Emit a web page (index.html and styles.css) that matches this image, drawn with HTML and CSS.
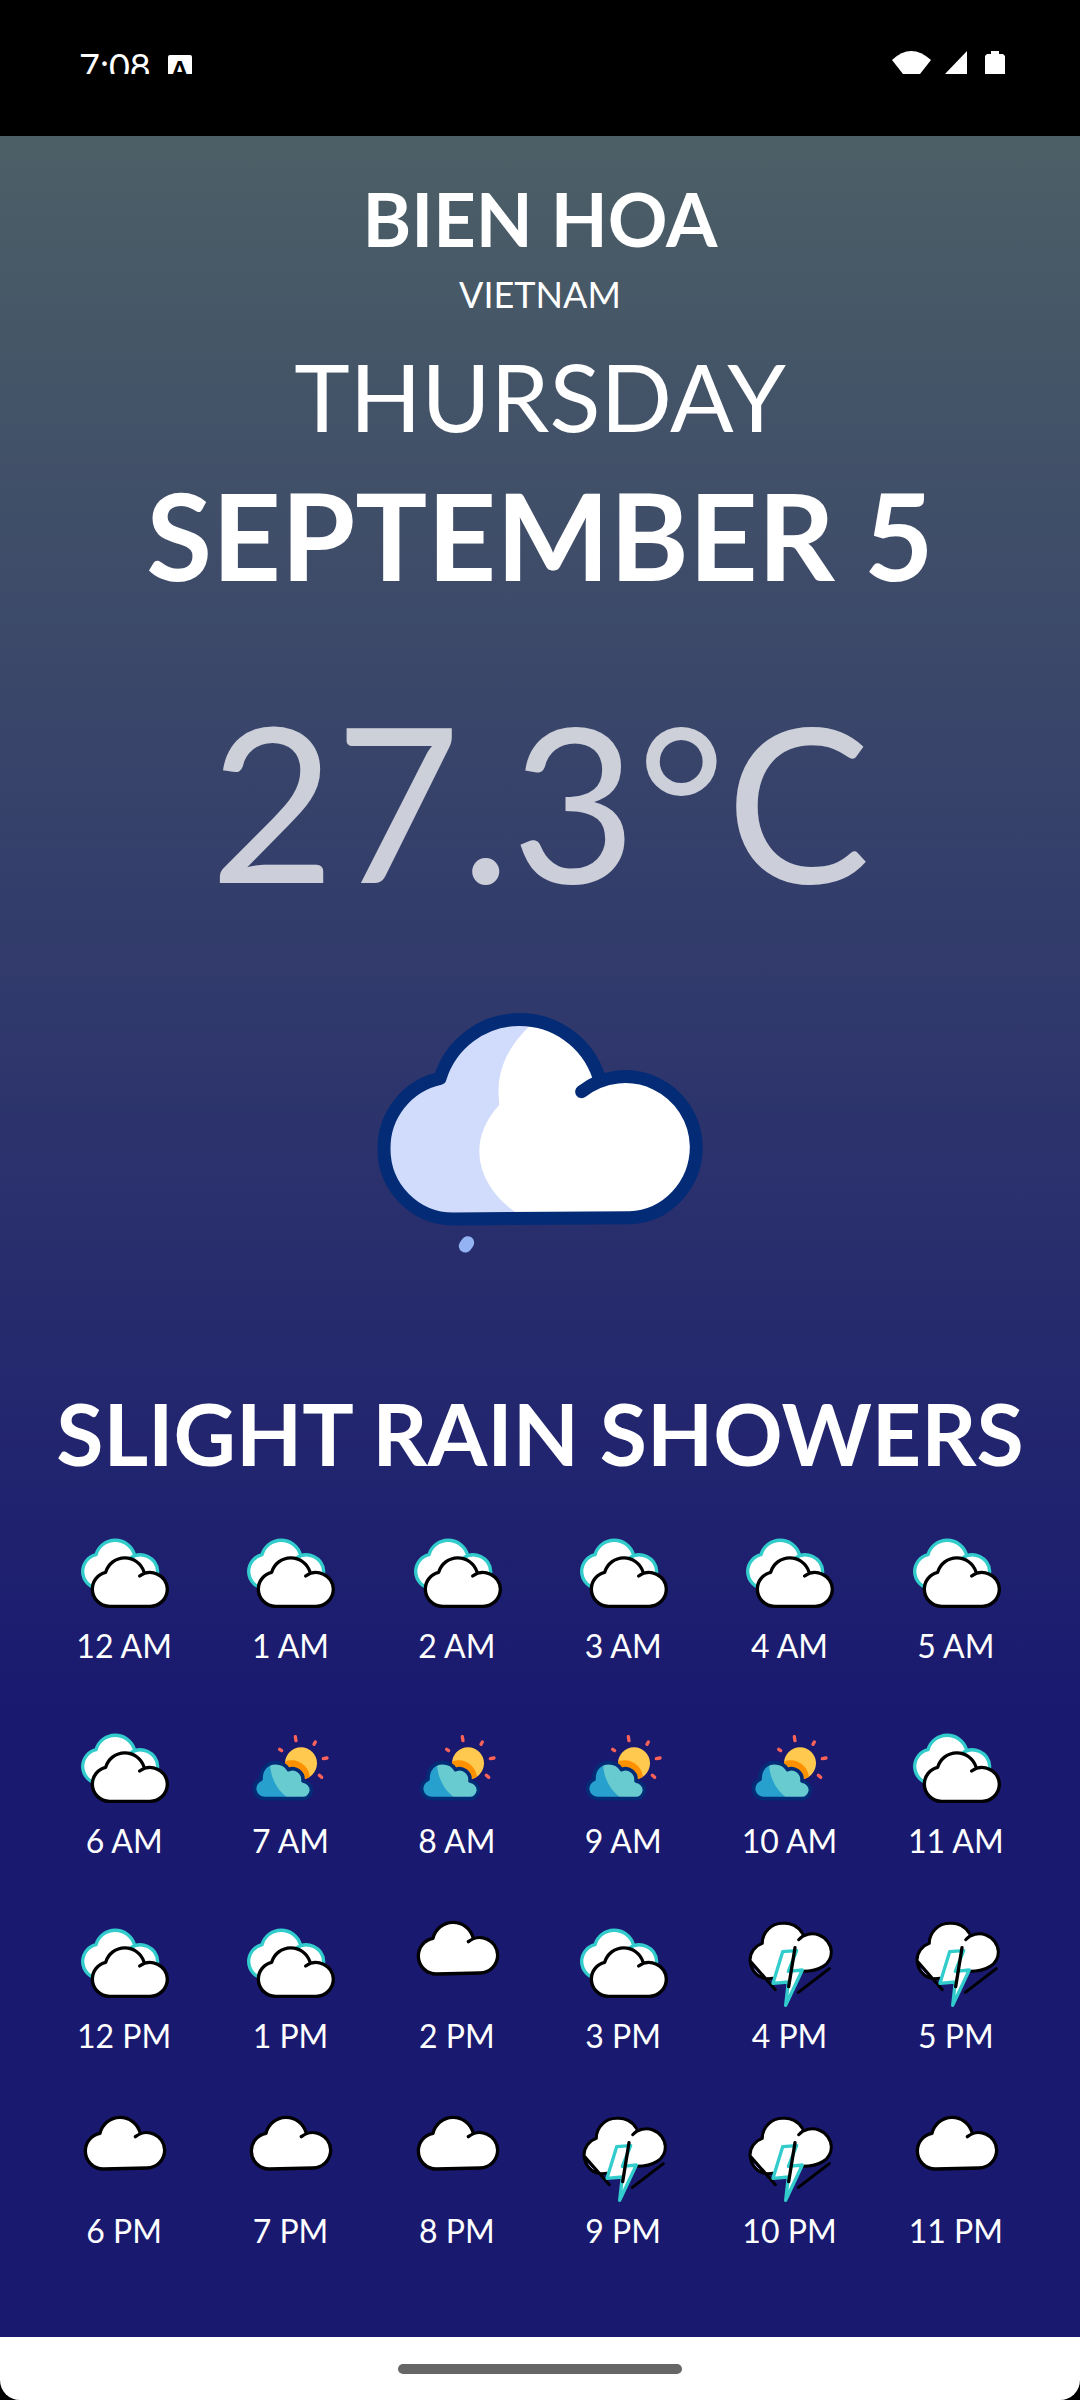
FILE: index.html
```html
<!DOCTYPE html>
<html lang="en">
<head>
<meta charset="utf-8">
<meta name="viewport" content="width=device-width, initial-scale=1">
<title>Weather – Bien Hoa</title>
<link rel="stylesheet" href="styles.css">
</head>
<body>
<svg class="sprite" aria-hidden="true">
  <defs>
    <clipPath id="sun-clip"><circle cx="183" cy="139" r="48"/></clipPath>
    <g id="cloud-shape">
      <path d="M107 253A52 52 0 0 1 55 201A52 52 0 0 1 95 151A59 59 0 0 1 210 150L197 162A52 52 0 0 1 280 201A52 52 0 0 1 228 253Z" fill="#fff" stroke="none"/>
      <path d="M210 150A60 60 0 0 0 95 151A52 52 0 0 0 55 201A52 52 0 0 0 107 253H228A52 52 0 0 0 280 201A52 52 0 0 0 197 162" fill="none" stroke-width="10"/>
    </g>
  </defs>
  <symbol id="overcast" viewBox="0 0 300 300">
    <use href="#cloud-shape" x="-29" y="-53" stroke="#33cccc"/>
    <use href="#cloud-shape" stroke="#000"/>
  </symbol>
  <symbol id="cloudy" viewBox="0 0 300 300">
    <path d="M88 186A54 54 0 0 1 34 132A54 54 0 0 1 78 79A62 62 0 0 1 198 76L184 89A54 54 0 0 1 272 129A54 54 0 0 1 219 183Z" fill="#fff"/>
    <path d="M198 76A62 62 0 0 0 78 79A54 54 0 0 0 34 132A54 54 0 0 0 88 186L219 183A54 54 0 0 0 272 129A54 54 0 0 0 184 89" fill="none" stroke="#000" stroke-width="10"/>
  </symbol>
  <symbol id="partly" viewBox="0 0 300 300">
    <circle cx="183" cy="139" r="48" fill="#ffc84e"/>
    <circle cx="155" cy="185" r="55" fill="#ff9100" clip-path="url(#sun-clip)"/>
    <path d="M75 245A30 30 0 0 1 63 187C62 158 80 137 107 137C125 137 138 145 146 158C165 148 192 165 189 192C205 196 215 208 214 222C212 237 200 245 190 245Z" fill="#67cbd0"/>
    <path d="M75 245A30 30 0 0 1 63 187C62 164 72 147 90 140C92 185 112 220 146 245Z" fill="#27a0cd"/>
    <path d="M75 245A30 30 0 0 1 63 187C62 158 80 137 107 137C125 137 138 145 146 158C165 148 192 165 189 192C205 196 215 208 214 222C212 237 200 245 190 245Z" fill="none" stroke="#032b76" stroke-width="11"/>
    <path d="M166 59l2 12M226 75l-4 7M119 97l6 4M250 125l11-2M238 175l7 6" fill="none" stroke="#ff6259" stroke-width="10"/>
  </symbol>
  <symbol id="storm" viewBox="0 0 300 300">
    <path d="M70 94A61 60 0 0 1 131 34A61 61 0 0 1 190 64L179 83A57 57 0 0 1 277 119C277 158 240 178 191 178L101 199L76 196L33 144C33 120 48 101 70 94Z" fill="#fff"/>
    <path d="M46 171Q56 188 70 190" fill="none" stroke="#fff" stroke-width="2"/>
    <path d="M190 64A61 61 0 0 0 131 34A61 60 0 0 0 70 94C48 101 33 122 33 144C35 178 60 206 101 199M179 83A57 57 0 0 1 277 119C277 158 240 178 191 178M33 146L109 233M271 170L178 241" fill="none" stroke="#000" stroke-width="9"/>
    <path d="M173 116L131 119L102 214L148 210L140 280L190 174L148 178Z" fill="#fff" stroke="#33cccc" stroke-width="10"/>
    <path d="M168 107L149 224" fill="none" stroke="#000" stroke-width="10"/>
  </symbol>
</svg>

<header class="status">
  <div class="status-row">
    <div class="status-side">
      <time class="clock">7:08</time>
      <span class="badge">A</span>
    </div>
    <div class="status-side status-icons">
      <svg width="39" height="34" viewBox="0 0 39 34" aria-label="Wi-Fi"><path d="M0 9Q19 -9 39 9L28 23H11Z" fill="#fff"/></svg>
      <svg width="28" height="24" viewBox="0 0 28 24" aria-label="Signal"><path d="M23 0V24H0Z" fill="#fff"/></svg>
      <svg width="20" height="34" viewBox="0 0 20 34" aria-label="Battery"><path d="M6 0H14V3H18L20 5V34H0V5L2 3H6Z" fill="#fff"/></svg>
    </div>
  </div>
</header>

<main class="weather">
  <h1 class="city">BIEN HOA</h1>
  <p class="country">VIETNAM</p>
  <p class="weekday">THURSDAY</p>
  <p class="date">SEPTEMBER 5</p>
  <p class="temperature">27.3°C</p>
  <svg class="hero" viewBox="0 0 1080 840" role="img" aria-label="Rain cloud">
    <path d="M280 690A208 210 0 0 1 72 480A214 214 0 0 1 240 268A250 250 0 0 1 716 262L665 308A213 213 0 0 1 1009 472A205 214 0 0 1 808 686Z" fill="#fff"/>
    <path d="M280 690A208 210 0 0 1 72 480A214 214 0 0 1 240 268A250 250 0 0 1 520 100C440 175 405 250 418 347C375 395 358 440 358 487C358 560 405 630 475 676Z" fill="#d1dbfb"/>
    <path d="M716 262A250 250 0 0 0 240 268A214 214 0 0 0 72 480A208 210 0 0 0 280 690L808 686A205 214 0 0 0 1009 472A213 213 0 0 0 665 308" fill="none" stroke="#032b76" stroke-width="39" stroke-linecap="round" stroke-linejoin="round"/>
    <path d="M323 761L316 771" stroke="#94b3f3" stroke-width="39" stroke-linecap="round"/>
  </svg>
  <h2 class="condition">SLIGHT RAIN SHOWERS</h2>
  <ul class="hours">
    <li class="hour"><svg class="icon" aria-hidden="true"><use href="#overcast"/></svg><span>12 AM</span></li>
    <li class="hour"><svg class="icon" aria-hidden="true"><use href="#overcast"/></svg><span>1 AM</span></li>
    <li class="hour"><svg class="icon" aria-hidden="true"><use href="#overcast"/></svg><span>2 AM</span></li>
    <li class="hour"><svg class="icon" aria-hidden="true"><use href="#overcast"/></svg><span>3 AM</span></li>
    <li class="hour"><svg class="icon" aria-hidden="true"><use href="#overcast"/></svg><span>4 AM</span></li>
    <li class="hour"><svg class="icon" aria-hidden="true"><use href="#overcast"/></svg><span>5 AM</span></li>
    <li class="hour"><svg class="icon" aria-hidden="true"><use href="#overcast"/></svg><span>6 AM</span></li>
    <li class="hour"><svg class="icon" aria-hidden="true"><use href="#partly"/></svg><span>7 AM</span></li>
    <li class="hour"><svg class="icon" aria-hidden="true"><use href="#partly"/></svg><span>8 AM</span></li>
    <li class="hour"><svg class="icon" aria-hidden="true"><use href="#partly"/></svg><span>9 AM</span></li>
    <li class="hour"><svg class="icon" aria-hidden="true"><use href="#partly"/></svg><span>10 AM</span></li>
    <li class="hour"><svg class="icon" aria-hidden="true"><use href="#overcast"/></svg><span>11 AM</span></li>
    <li class="hour"><svg class="icon" aria-hidden="true"><use href="#overcast"/></svg><span>12 PM</span></li>
    <li class="hour"><svg class="icon" aria-hidden="true"><use href="#overcast"/></svg><span>1 PM</span></li>
    <li class="hour"><svg class="icon" aria-hidden="true"><use href="#cloudy"/></svg><span>2 PM</span></li>
    <li class="hour"><svg class="icon" aria-hidden="true"><use href="#overcast"/></svg><span>3 PM</span></li>
    <li class="hour"><svg class="icon" aria-hidden="true"><use href="#storm"/></svg><span>4 PM</span></li>
    <li class="hour"><svg class="icon" aria-hidden="true"><use href="#storm"/></svg><span>5 PM</span></li>
    <li class="hour"><svg class="icon" aria-hidden="true"><use href="#cloudy"/></svg><span>6 PM</span></li>
    <li class="hour"><svg class="icon" aria-hidden="true"><use href="#cloudy"/></svg><span>7 PM</span></li>
    <li class="hour"><svg class="icon" aria-hidden="true"><use href="#cloudy"/></svg><span>8 PM</span></li>
    <li class="hour"><svg class="icon" aria-hidden="true"><use href="#storm"/></svg><span>9 PM</span></li>
    <li class="hour"><svg class="icon" aria-hidden="true"><use href="#storm"/></svg><span>10 PM</span></li>
    <li class="hour"><svg class="icon" aria-hidden="true"><use href="#cloudy"/></svg><span>11 PM</span></li>
  </ul>
</main>

<footer class="nav-bar"><div class="nav-inner"><div class="nav-pill"></div></div></footer>
</body>
</html>
```
FILE: styles.css
```css
* {
  box-sizing: border-box;
}

body {
  margin: 0;
  min-height: 100vh;
  display: flex;
  flex-direction: column;
  background: #000;
  color: #fff;
  font-family: Lato, "Open Sans", sans-serif;
}

h1, h2, p, ul {
  margin: 0;
  padding: 0;
}

.sprite {
  position: absolute;
  width: 0;
  height: 0;
}

.sprite path {
  stroke-linecap: round;
  stroke-linejoin: round;
}

/* Status bar: its content is cut off along the bottom edge of the row */
.status {
  padding-bottom: 62px;
  background: #000;
}

.status-row {
  display: flex;
  justify-content: space-between;
  align-items: flex-start;
  height: 74px;
  padding: 0 75px 0 79px;
  overflow: hidden;
}

.status-side {
  display: flex;
  align-items: flex-start;
  gap: 17px;
}

.clock {
  margin-top: 46px;
  font-size: 36px;
  line-height: 40px;
}

.badge {
  width: 24px;
  height: 28px;
  margin-top: 55px;
  border-radius: 2px;
  background: #fff;
  color: #000;
  font-size: 24px;
  font-weight: 900;
  line-height: 30px;
  text-align: center;
}

.status-icons {
  padding-top: 51px;
  gap: 13px;
}

.weather {
  flex: 1;
  display: flex;
  flex-direction: column;
  align-items: center;
  padding: 39px 41px 84px;
  background: linear-gradient(#4c5f66 0%, #191970 72%);
  text-align: center;
}

.city {
  font-size: 74px;
  font-weight: 700;
  line-height: 88px;
}

.country {
  margin-top: 11px;
  font-size: 36px;
  line-height: 40px;
}

.weekday {
  margin-top: 34px;
  font-size: 94px;
  line-height: 96px;
}

.date {
  margin-top: 31px;
  font-size: 120px;
  font-weight: 700;
  line-height: 120px;
}

.temperature {
  margin-top: 85px;
  color: rgba(255, 255, 255, 0.75);
  font-size: 216px;
  line-height: 240px;
}

.hero {
  width: 360px;
  height: 280px;
  margin-top: 69px;
}

.condition {
  margin-top: 124px;
  font-size: 86px;
  font-weight: 700;
  line-height: 80px;
  white-space: nowrap;
}

.hours {
  display: grid;
  grid-template-columns: repeat(6, 1fr);
  row-gap: 51px;
  width: 100%;
  margin-top: 49px;
  list-style: none;
}

.hour {
  display: flex;
  flex-direction: column;
  align-items: center;
  gap: 4px;
  font-size: 32px;
  line-height: 40px;
}

.icon {
  width: 100px;
  height: 100px;
}

.nav-bar {
  background: #000;
}

.nav-inner {
  display: flex;
  justify-content: center;
  padding: 27px 0 26px;
  border-radius: 0 0 20px 20px;
  background: #fff;
}

.nav-pill {
  width: 284px;
  height: 10px;
  border-radius: 5px;
  background: #666;
}
```
